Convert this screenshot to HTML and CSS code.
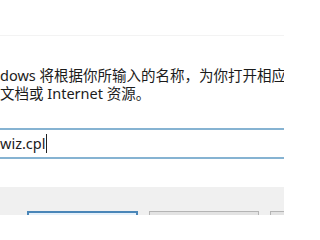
FILE: index.html
```html
<!DOCTYPE html>
<html lang="zh-CN">
<head>
<meta charset="utf-8">
<link rel="stylesheet" href="styles.css">
</head>
<body>
<div class="dialog">
  <div class="titlebar"></div>
  <div class="content">
    <p class="message">dows 将根据你所输入的名称，为你打开相应<br>文档或 Internet 资源。</p>
    <div class="field"><span class="value">wiz.cpl</span><span class="caret"></span></div>
  </div>
  <div class="footer">
    <div class="btn btn-primary"></div>
    <div class="btn"></div>
    <div class="btn"></div>
  </div>
</div>
</body>
</html>
```
FILE: styles.css
```css
html, body {
  margin: 0;
  padding: 0;
  background: #ffffff;
  overflow: hidden;
}
.dialog {
  width: 284px;
  height: 215px;
  overflow: hidden;
  font-family: "Noto Sans", "Noto Sans CJK SC", sans-serif;
  font-size: 14.5px;
  color: #1b1b1b;
  white-space: nowrap;
}
.titlebar {
  height: 35px;
  border-bottom: 1px solid #f3f3f3;
}
.content {
  padding-top: 30px;
}
.message {
  margin: 0;
  line-height: 18px;
}
.field {
  margin-top: 26px;
  height: 27px;
  border-top: 2px solid #86b3d2;
  border-bottom: 2px solid #86b3d2;
  line-height: 27px;
  display: flex;
  align-items: center;
}
.value {
  padding-left: 0;
}
.caret {
  display: inline-block;
  width: 1px;
  height: 19px;
  background: #222;
  margin-left: 1px;
}
.footer {
  margin-top: 28px;
  background: #f0f0f0;
  height: 60px;
  display: flex;
  gap: 11px;
  padding: 24px 0 0 27px;
}
.btn {
  flex: none;
  width: 108px;
  height: 30px;
  border: 1px solid #b4b4b4;
  background: #e3e3e3;
}
.btn-primary {
  border: 2px solid #4a86b8;
  width: 107px;
  background: #e5f1fb;
}
```
